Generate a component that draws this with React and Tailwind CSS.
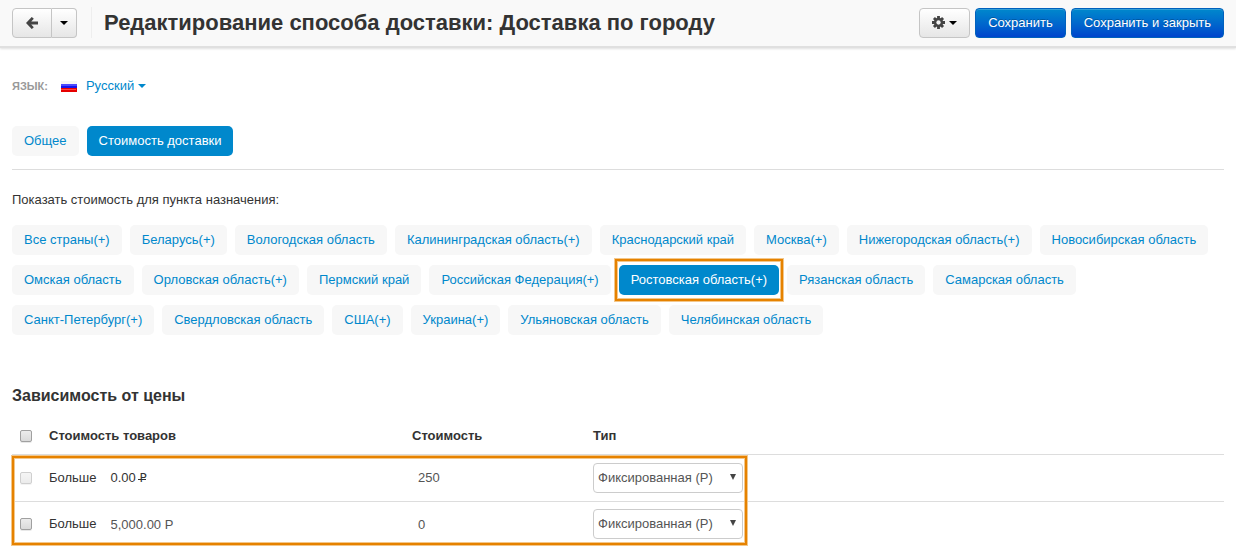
import React from "react";

const destinations = [
  "Все страны(+)",
  "Беларусь(+)",
  "Вологодская область",
  "Калининградская область(+)",
  "Краснодарский край",
  "Москва(+)",
  "Нижегородская область(+)",
  "Новосибирская область",
  "Омская область",
  "Орловская область(+)",
  "Пермский край",
  "Российская Федерация(+)",
  "Ростовская область(+)",
  "Рязанская область",
  "Самарская область",
  "Санкт-Петербург(+)",
  "Свердловская область",
  "США(+)",
  "Украина(+)",
  "Ульяновская область",
  "Челябинская область",
];

const activeDestination = "Ростовская область(+)";

function Caret({ className = "" }) {
  return (
    <svg viewBox="0 0 8 4" className={`h-1 w-2 fill-current ${className}`} aria-hidden="true">
      <path d="M0 0h8L4 4z" />
    </svg>
  );
}

function Highlight({ className }) {
  return (
    <span
      aria-hidden="true"
      className={`pointer-events-none absolute border-2 border-[#e68200] outline outline-[#f3c78b] shadow-[inset_0_0_0_1px_#f3c78b] ${className}`}
    />
  );
}

function Pill({ children, active, outlined }) {
  return (
    <span className="relative flex">
      <a
        href="#"
        className={`flex h-[30px] items-center whitespace-nowrap rounded-[5px] px-3 ${
          active ? "bg-[#0088cc] text-white" : "bg-[#f7f7f7] text-[#0088cc]"
        }`}
      >
        {children}
      </a>
      {outlined && <Highlight className="-inset-x-1 -inset-y-[6px]" />}
    </span>
  );
}

function Tick({ label, disabled }) {
  return (
    <input
      type="checkbox"
      aria-label={label}
      disabled={disabled}
      className="block h-3 w-3 appearance-none rounded-[2px] border border-[#a0a0a0] bg-linear-to-b from-[#ececec] to-[#dadada] shadow-[0_1px_0_#e8e8e8] checked:bg-[#0088cc] disabled:opacity-50"
    />
  );
}

function TypeSelect({ label }) {
  return (
    <div className="relative w-[150px]">
      <select
        aria-label={label}
        className="block h-[30px] w-full appearance-none rounded-[4px] border border-[#cccccc] bg-white px-1 text-[13px] text-[#555555]"
      >
        <option>Фиксированная (Р)</option>
        <option>Процент (%)</option>
      </select>
      <svg
        viewBox="0 0 6 6"
        className="pointer-events-none absolute right-[7px] top-[11px] h-[6px] w-[6px] fill-[#444444]"
        aria-hidden="true"
      >
        <path d="M0 0h6L3 6z" />
      </svg>
    </div>
  );
}

const inputClass = "h-[30px] min-w-0 bg-transparent px-[6px] text-[13px] text-[#555555]";
const greyButton =
  "flex h-[30px] items-center justify-center border border-[#c5c5c5] bg-linear-to-b from-white to-[#e6e6e6] text-[#444444]";
const blueButton =
  "h-[30px] whitespace-nowrap rounded-[4px] border border-[#0061bd] bg-linear-to-b from-[#0088cc] to-[#0044cc] px-3 text-white shadow-[inset_0_1px_0_rgba(255,255,255,0.2)] [text-shadow:0_-1px_0_rgba(0,0,0,0.25)]";

export default function App() {
  return (
    <div className="bg-white font-['Liberation_Sans',Arial,sans-serif] text-[13px] leading-5 text-[#333333]">
      <header className="flex items-center justify-between border-b-2 border-[#e0e0e0] bg-[#f9f9f9] px-3 pt-[7px] pb-2 shadow-[0_1px_2px_rgba(0,0,0,0.12)]">
        <div className="flex items-center">
          <div className="flex">
            <button type="button" aria-label="Назад" className={`${greyButton} w-10 rounded-l-[4px]`}>
              <svg viewBox="0 0 12 12" className="h-3 w-3" fill="none" stroke="currentColor" aria-hidden="true">
                <path d="M6.8.9 1.9 6l4.9 5.1M2 6h10" strokeWidth="2.8" />
              </svg>
            </button>
            <button
              type="button"
              aria-label="Меню"
              className={`${greyButton} w-[25px] rounded-r-[4px] border-l-0`}
            >
              <Caret className="text-black" />
            </button>
          </div>
          <div className="mr-3 ml-[14px] h-[31px] w-px bg-[#eeeeee]" />
          <h1 className="text-[22px] leading-[31px] font-bold">
            Редактирование способа доставки: Доставка по городу
          </h1>
        </div>
        <div className="flex items-center gap-[5px]">
          <button type="button" aria-label="Настройки" className={`${greyButton} w-[51px] gap-1 rounded-[4px]`}>
            <svg viewBox="0 0 12 12" className="h-[13px] w-[13px]" aria-hidden="true">
              <g stroke="currentColor" strokeWidth="2.6">
                <path d="M6 0v12M0 6h12M1.8 1.8l8.4 8.4M10.2 1.8l-8.4 8.4" />
              </g>
              <circle cx="6" cy="6" r="4.3" fill="currentColor" />
              <circle cx="6" cy="6" r="2" fill="#f4f4f4" />
            </svg>
            <Caret className="text-black" />
          </button>
          <button type="button" className={blueButton}>Сохранить</button>
          <button type="button" className={blueButton}>Сохранить и закрыть</button>
        </div>
      </header>

      <main className="px-3 pt-7">
        <div className="flex items-center">
          <span className="text-[11px] font-bold text-[#999999] uppercase">Язык:</span>
          <svg viewBox="0 0 16 11" className="ml-[13px] h-[11px] w-4" aria-hidden="true">
            <rect width="16" height="11" fill="#f5f5f5" />
            <rect y="3" width="16" height="5" fill="#1414ee" />
            <rect y="3" width="16" height="2" fill="#4a4aff" />
            <rect y="7" width="16" height="4" fill="#e60000" />
            <rect y="8" width="15" height="1" fill="#ff4545" />
          </svg>
          <button type="button" className="ml-[9px] flex items-center gap-1 text-[#0088cc]">
            Русский
            <Caret />
          </button>
        </div>

        <nav className="mt-[30px] flex gap-2 border-b border-[#dddddd] pb-[13px]">
          <Pill>Общее</Pill>
          <Pill active>Стоимость доставки</Pill>
        </nav>

        <p className="mt-5">Показать стоимость для пункта назначения:</p>
        <div className="mt-[15px] flex flex-wrap gap-x-2 gap-y-[10px]">
          {destinations.map((name) => (
            <Pill key={name} active={name === activeDestination} outlined={name === activeDestination}>
              {name}
            </Pill>
          ))}
        </div>

        <h2 className="mt-[51px] text-base leading-5 font-bold">Зависимость от цены</h2>
        <div className="relative mt-[11px]">
          <table className="w-full table-fixed border-collapse text-left">
            <colgroup>
              <col className="w-[29px]" />
              <col className="w-[363px]" />
              <col className="w-[181px]" />
              <col />
            </colgroup>
            <thead>
              <tr className="h-[37px] border-b border-[#dddddd]">
                <th className="pt-[2px] pl-2"><Tick label="Выбрать все" /></th>
                <th className="px-2 pt-[2px]">Стоимость товаров</th>
                <th className="px-2 pt-[2px]">Стоимость</th>
                <th className="px-2 pt-[2px]">Тип</th>
              </tr>
            </thead>
            <tbody>
              <tr className="h-[47px] border-b border-[#dddddd]">
                <td className="pl-2"><Tick label="Больше 0.00" disabled /></td>
                <td className="px-2">
                  <span>Больше</span>
                  <span className="ml-[14px]">
                    0.00{" "}
                    <span className="relative inline-block font-['DejaVu_Sans',sans-serif] text-[12px] leading-3 before:absolute before:-left-px before:bottom-1 before:h-px before:w-2 before:bg-[#333333]">
                      Р
                    </span>
                  </span>
                </td>
                <td className="px-2">
                  <input aria-label="Стоимость" defaultValue="250" className={`${inputClass} w-20`} />
                </td>
                <td className="px-2"><TypeSelect label="Тип" /></td>
              </tr>
              <tr className="h-[46px]">
                <td className="pl-2"><Tick label="Больше 5,000.00" /></td>
                <td className="px-2">
                  <label className="flex items-center gap-2">
                    Больше
                    <input defaultValue="5,000.00 Р" className={`${inputClass} w-32`} />
                  </label>
                </td>
                <td className="px-2">
                  <input aria-label="Стоимость" defaultValue="0" className={`${inputClass} w-20`} />
                </td>
                <td className="px-2"><TypeSelect label="Тип" /></td>
              </tr>
            </tbody>
          </table>
          <Highlight className="top-[39px] bottom-[2px] left-0 w-[735px]" />
        </div>
      </main>
    </div>
  );
}
